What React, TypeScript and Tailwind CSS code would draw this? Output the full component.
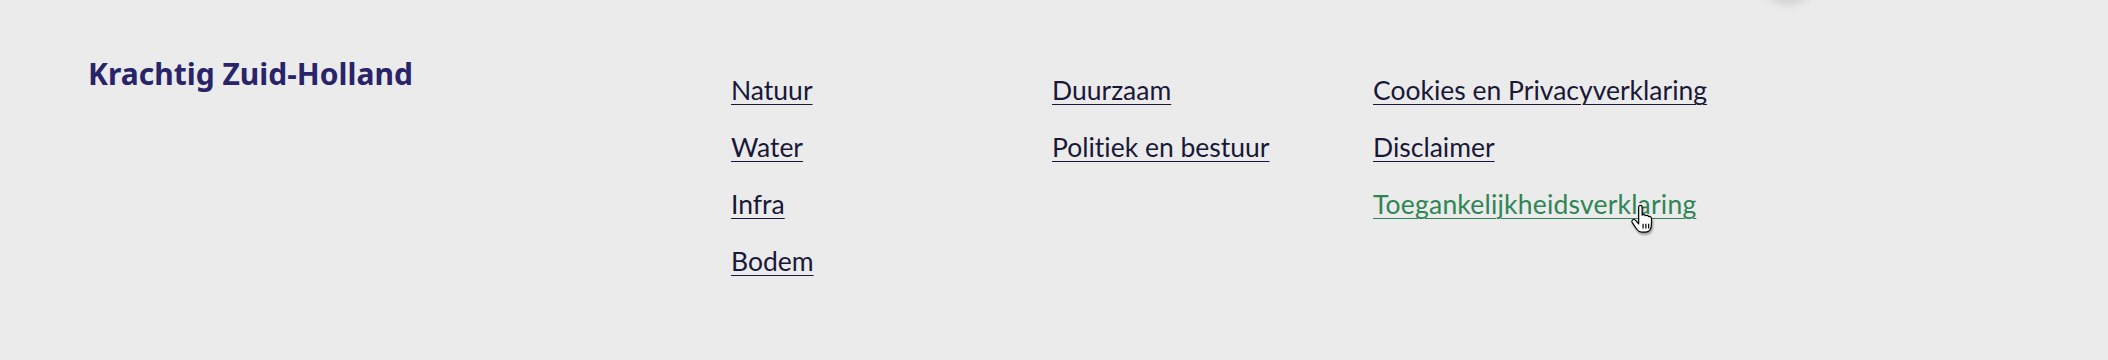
import React from "react";

const col1 = ["Natuur", "Water", "Infra", "Bodem"];
const col2 = ["Duurzaam", "Politiek en bestuur"];
const col3 = ["Cookies en Privacyverklaring", "Disclaimer", "Toegankelijkheidsverklaring"];

function HandCursor() {
  return (
    <svg width="24" height="28" viewBox="0 0 17 21" className="absolute left-[1630px] top-[205px] drop-shadow-[1px_2px_1px_rgba(0,0,0,0.35)]">
      <path
        d="M6 1.6C6 0.8 6.6 0.3 7.3 0.3C8 0.3 8.6 0.8 8.6 1.6V7.6C9.4 7 10.6 7.2 11 8C11.8 7.5 13 7.8 13.4 8.7C14.3 8.3 15.6 8.8 15.6 10V14.5C15.6 17.8 14 20.4 11 20.4H8.3C6.6 20.4 5.6 19.6 4.6 18.2L1.2 13.2C0.7 12.4 0.9 11.5 1.6 11.1C2.3 10.7 3.2 11 3.8 11.7L6 14.2Z"
        fill="#fff"
        stroke="#000"
        strokeWidth="0.9"
        strokeLinejoin="round"
      />
      <path d="M9.3 14V17.6M11.4 14V17.6M13.5 14V17.6" stroke="#000" strokeWidth="0.9" />
    </svg>
  );
}

function LinkCol({ items, width }: { items: string[]; width: string }) {
  return (
    <ul className={`flex flex-col gap-[23px] ${width}`}>
      {items.map((t) => (
        <li key={t} className="leading-[34px]">
          <a
            href="#"
            className={`underline decoration-1 underline-offset-[4px] ${
              t === "Toegankelijkheidsverklaring" ? "text-[#2f8553] tracking-[0.2px]" : "text-[#1a1838]"
            }`}
          >
            {t}
          </a>
        </li>
      ))}
    </ul>
  );
}

export default function App() {
  return (
    <div className="relative h-[360px] w-full overflow-hidden bg-[#ebebeb] font-['Lato',sans-serif] [font-variant-ligatures:none]">
      <div className="absolute left-[1760px] top-[-56px] h-[56px] w-[56px] rounded-full bg-[#ebebeb] shadow-[0_4px_10px_rgba(0,0,0,0.12)]" />
      <div className="flex pl-[88px]">
        <div className="w-[643px] pt-[55px]">
          <h2 className="font-['Noto_Sans',sans-serif] text-[30px] font-bold leading-[38px] text-[#29246a]">Krachtig Zuid-Holland</h2>
        </div>
        <div className="flex pt-[73px] text-[26.5px] font-normal">
          <LinkCol items={col1} width="w-[321px]" />
          <LinkCol items={col2} width="w-[321px]" />
          <LinkCol items={col3} width="w-[400px]" />
        </div>
      </div>
      <HandCursor />
    </div>
  );
}
